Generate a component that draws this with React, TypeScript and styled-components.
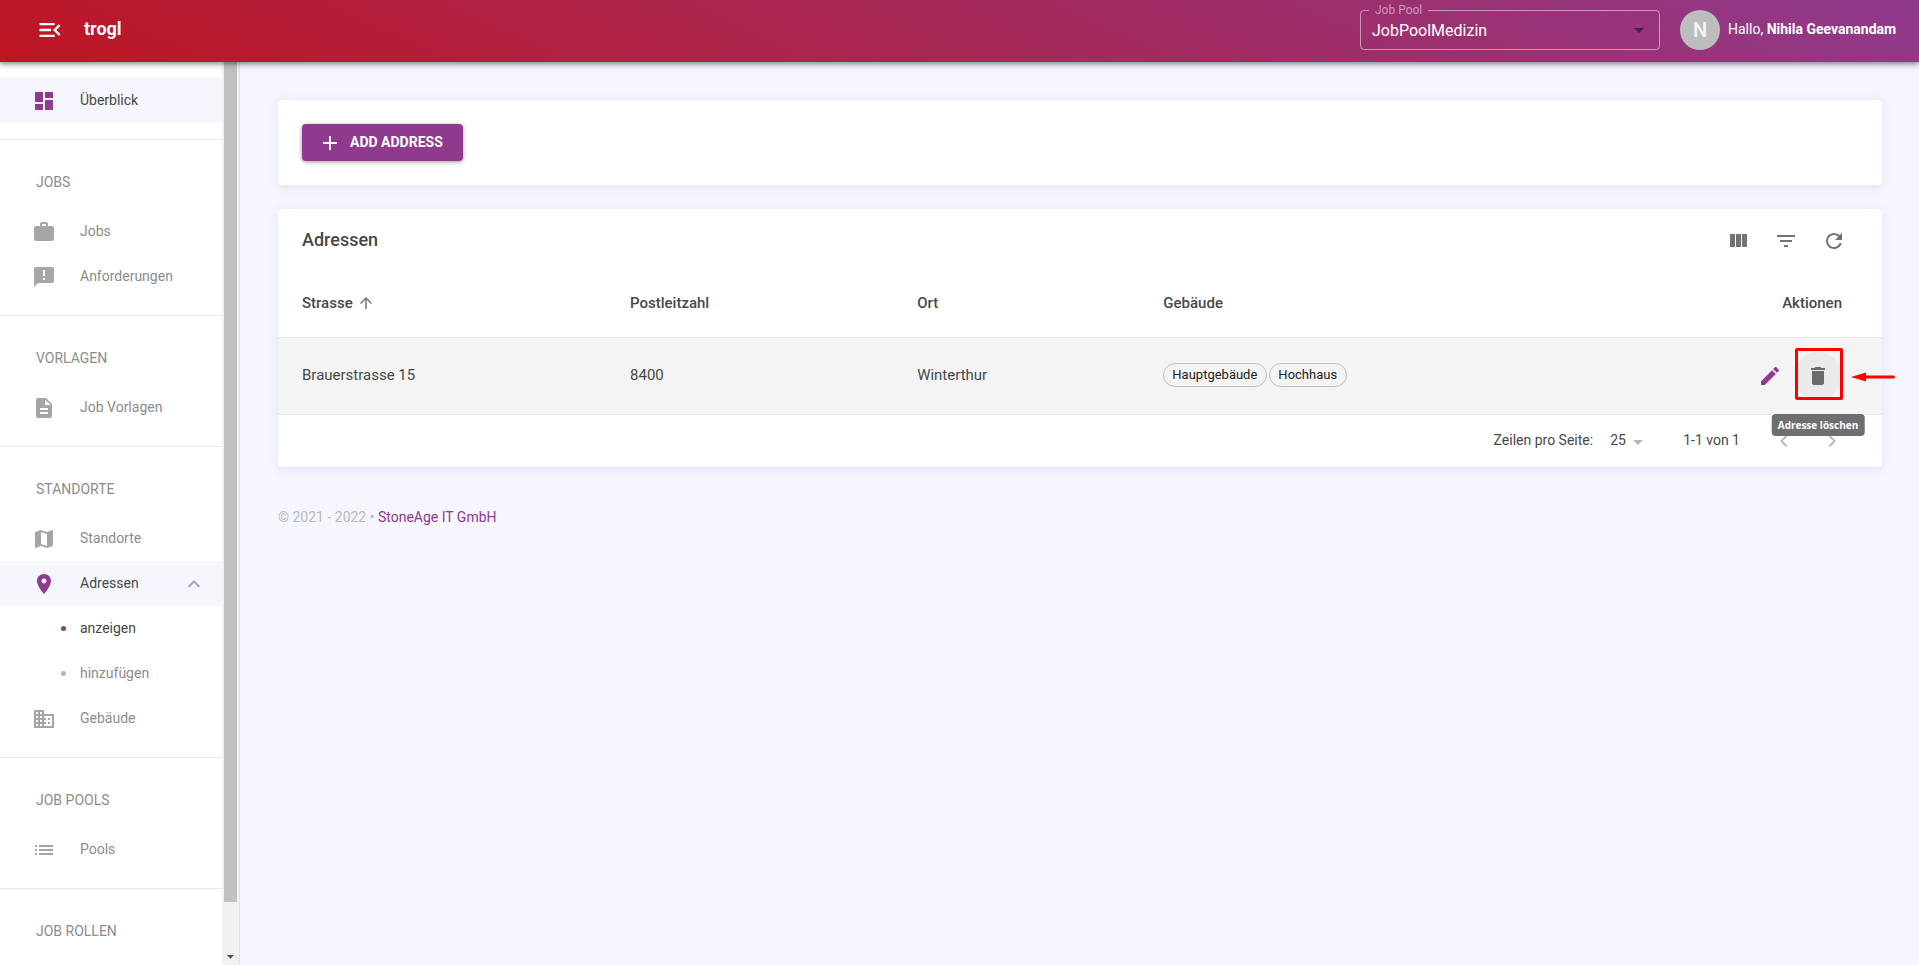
import React from 'react';
import styled, { createGlobalStyle, css } from 'styled-components';

const color = {
  primary: '#8f3a8d',
  page: '#f6f6ff',
  text: '#484848',
  muted: '#8c8c8c',
  icon: '#a6a6a6',
  line: '#e8e8e8',
};

const paths = {
  menuOpen:
    'M3 18h13v-2H3v2zM3 13h10v-2H3v2zm0-7v2h13V6H3zm18 9.59L17.42 12 21 8.41 19.59 7l-5 5 5 5L21 15.59z',
  dashboard: 'M3 13h8V3H3v10zm0 8h8v-6H3v6zm10 0h8V11h-8v10zm0-18v6h8V3h-8z',
  work:
    'M20 6h-4V4c0-1.11-.89-2-2-2h-4c-1.11 0-2 .89-2 2v2H4c-1.11 0-1.99.89-1.99 2L2 19c0 1.11.89 2 2 2h16c1.11 0 2-.89 2-2V8c0-1.11-.89-2-2-2zm-6 0h-4V4h4v2z',
  announcement:
    'M20 2H4c-1.1 0-1.99.9-1.99 2L2 22l4-4h14c1.1 0 2-.9 2-2V4c0-1.1-.9-2-2-2zm-7 9h-2V5h2v6zm0 4h-2v-2h2v2z',
  description:
    'M14 2H6c-1.1 0-1.99.9-1.99 2L4 20c0 1.1.89 2 1.99 2H18c1.1 0 2-.9 2-2V8l-6-6zm2 16H8v-2h8v2zm0-4H8v-2h8v2zm-3-5V3.5L18.5 9H13z',
  map:
    'M20.5 3l-.16.03L15 5.1 9 3 3.36 4.9c-.21.07-.36.25-.36.48V20.5c0 .28.22.5.5.5l.16-.03L9 18.9l6 2.1 5.64-1.9c.21-.07.36-.25.36-.48V3.5c0-.28-.22-.5-.5-.5zM15 19l-6-2.11V5l6 2.11V19z',
  place:
    'M12 2C8.13 2 5 5.13 5 9c0 5.25 7 13 7 13s7-7.75 7-13c0-3.87-3.13-7-7-7zm0 9.5c-1.38 0-2.5-1.12-2.5-2.5s1.12-2.5 2.5-2.5 2.5 1.12 2.5 2.5-1.12 2.5-2.5 2.5z',
  building:
    'M12 7V3H2v18h20V7H12zM6 19H4v-2h2v2zm0-4H4v-2h2v2zm0-4H4V9h2v2zm0-4H4V5h2v2zm4 12H8v-2h2v2zm0-4H8v-2h2v2zm0-4H8V9h2v2zm0-4H8V5h2v2zm10 12h-8v-2h2v-2h-2v-2h2v-2h-2V9h8v10zm-2-8h-2v2h2v-2zm0 4h-2v2h2v-2z',
  list:
    'M3 13h2v-2H3v2zm0 4h2v-2H3v2zm0-8h2V7H3v2zm4 4h14v-2H7v2zm0 4h14v-2H7v2zM7 7v2h14V7H7z',
  expandLess: 'M12 8l-6 6 1.41 1.41L12 10.83l4.59 4.58L18 14z',
  add: 'M19 13h-6v6h-2v-6H5v-2h6V5h2v6h6v2z',
  viewColumn: 'M10 18h5V5h-5v13zm-6 0h5V5H4v13zM16 5v13h5V5h-5z',
  filter: 'M10 18h4v-2h-4v2zM3 6v2h18V6H3zm3 7h12v-2H6v2z',
  refresh:
    'M17.65 6.35C16.2 4.9 14.21 4 12 4c-4.42 0-7.99 3.58-7.99 8s3.57 8 7.99 8c3.73 0 6.84-2.55 7.73-6h-2.08c-.82 2.33-3.04 4-5.65 4-3.31 0-6-2.69-6-6s2.69-6 6-6c1.66 0 3.14.69 4.22 1.78L13 11h7V4l-2.35 2.35z',
  arrowUp: 'M4 12l1.41 1.41L11 7.83V20h2V7.83l5.58 5.59L20 12l-8-8-8 8z',
  edit:
    'M3 17.25V21h3.75L17.81 9.94l-3.75-3.75L3 17.25zM20.71 7.04c.39-.39.39-1.02 0-1.41l-2.34-2.34c-.39-.39-1.02-.39-1.41 0l-1.83 1.83 3.75 3.75 1.83-1.83z',
  trash: 'M6 19c0 1.1.9 2 2 2h8c1.1 0 2-.9 2-2V7H6v12zM19 4h-3.5l-1-1h-5l-1 1H5v2h14V4z',
  chevronLeft: 'M15.41 7.41L14 6l-6 6 6 6 1.41-1.41L10.83 12z',
  chevronRight: 'M10 6L8.59 7.41 13.17 12l-4.58 4.59L10 18l6-6z',
  dropDown: 'M7 10l5 5 5-5z',
};

type IconName = keyof typeof paths;

const Svg = styled.svg`
  display: block;
  flex: none;
  fill: currentColor;
`;

const Icon = ({ name, size = 24 }: { name: IconName; size?: number }) => (
  <Svg width={size} height={size} viewBox="0 0 24 24" aria-hidden="true">
    <path d={paths[name]} />
  </Svg>
);

const GlobalStyle = createGlobalStyle`
  *, *::before, *::after { box-sizing: border-box; }
  body {
    margin: 0;
    background: ${color.page};
    color: ${color.text};
    font-family: Roboto, "Liberation Sans", sans-serif;
    font-size: 14px;
    line-height: 20px;
  }
  button, select { font: inherit; color: inherit; }
  a { color: inherit; text-decoration: none; }
`;

const Shell = styled.div`
  display: flex;
  flex-direction: column;
  height: 100vh;
`;

const Header = styled.header`
  position: relative;
  z-index: 2;
  display: flex;
  align-items: center;
  flex: none;
  height: 62px;
  padding: 0 19px 2px 30px;
  color: #fff;
  background: linear-gradient(25deg, #be1622, ${color.primary});
  box-shadow: 0 2px 4px rgba(0, 0, 0, 0.32), 0 3px 8px rgba(0, 0, 0, 0.16);
`;

const IconButton = styled.button<{ $size?: number; $active?: boolean }>`
  display: flex;
  align-items: center;
  justify-content: center;
  flex: none;
  width: ${(p) => p.$size ?? 48}px;
  height: ${(p) => p.$size ?? 48}px;
  padding: 0;
  border: 0;
  border-radius: 50%;
  background: ${(p) => (p.$active ? '#eaeaea' : 'transparent')};
`;

const Brand = styled.a`
  margin-left: 14px;
  margin-right: auto;
  padding-bottom: 2px;
  font-size: 18px;
  font-weight: 700;
  line-height: 24px;
`;

const PoolField = styled.fieldset`
  position: relative;
  width: 300px;
  height: 50px;
  margin: 0 20px 10px 0;
  padding: 0;
  border: 1px solid rgba(255, 255, 255, 0.5);
  border-radius: 4px;

  legend {
    margin-left: 8px;
    padding: 0 6px;
    color: rgba(255, 255, 255, 0.5);
    font-size: 12px;
    line-height: 20px;
  }
`;

const PoolSelect = styled.select`
  display: block;
  width: 100%;
  height: 22px;
  padding: 0 32px 0 11px;
  border: 0;
  appearance: none;
  background: transparent;
  color: #fff;
  font-size: 16px;
  line-height: 22px;
`;

const PoolCaret = styled.span`
  position: absolute;
  right: 8px;
  bottom: 7px;
  color: #4b1d49;
  pointer-events: none;
`;

const Avatar = styled.span`
  display: flex;
  align-items: center;
  justify-content: center;
  width: 40px;
  height: 40px;
  margin-right: 8px;
  border-radius: 50%;
  background: #bdbdbd;
  color: ${color.page};
  font-size: 20px;
  font-weight: 500;
`;

const Greeting = styled.span`
  min-width: 172px;
  padding-bottom: 2px;
`;

const Body = styled.div`
  display: flex;
  flex: 1;
  min-height: 0;
`;

const Sidebar = styled.aside`
  display: flex;
  flex: none;
  width: 240px;
  border-right: 1px solid #e0e0e0;
  background: #fff;
`;

const Nav = styled.nav`
  flex: 1;
  overflow: hidden;
`;

const NavGroup = styled.section`
  padding: 16px 0;

  & + & {
    border-top: 1px solid ${color.line};
  }
`;

const NavHeading = styled.h2`
  margin: 0;
  padding: 16px 36px 17px;
  color: ${color.muted};
  font-size: 14px;
  font-weight: 400;
  line-height: 20px;
`;

const NavItem = styled.a<{ $selected?: boolean; $current?: boolean }>`
  display: flex;
  align-items: center;
  height: 45px;
  padding: 0 16px 0 32px;
  gap: 24px;
  color: ${(p) => (p.$selected || p.$current ? color.text : color.muted)};
  background: ${(p) => (p.$selected ? color.page : 'transparent')};

  span {
    padding-bottom: 2px;
  }

  svg {
    color: ${(p) => (p.$selected ? color.primary : color.icon)};
  }

  svg:last-child {
    margin-left: auto;
    color: ${color.icon};
  }
`;

const SubItem = styled(NavItem)`
  padding-left: 61px;
  gap: 14px;

  &::before {
    content: '';
    width: 5px;
    height: 5px;
    border-radius: 50%;
    background: ${(p) => (p.$current ? color.primary : '#b4b4b4')};
  }
`;

const ScrollTrack = styled.div`
  display: flex;
  flex-direction: column;
  align-items: center;
  width: 17px;
  padding: 0 2px;
  background: #f1f1f1;
  color: #505050;
`;

const ScrollThumb = styled.div`
  flex: 1;
  width: 100%;
  margin-bottom: 46px;
  background: #c1c1c1;
`;

const Main = styled.main`
  flex: 1;
  min-width: 0;
  padding: 38px 37px 38px 38px;
`;

const Card = styled.section<{ $padded?: boolean }>`
  margin-bottom: 24px;
  padding: ${(p) => (p.$padded ? '24px' : '0')};
  border-radius: 4px;
  background: #fff;
  box-shadow: 0 3px 11px #e8eafc, 0 3px 3px -2px #e4e6f8, 0 1px 8px #e8eafc;
`;

const AddButton = styled.button`
  display: flex;
  align-items: center;
  gap: 8px;
  height: 37px;
  padding: 0 20px 0 16px;
  border: 0;
  border-radius: 4px;
  background: ${color.primary};
  color: #fff;
  font-weight: 700;
  box-shadow: 0 1px 4px rgba(0, 0, 0, 0.4);

  span {
    padding-bottom: 2px;
  }
`;

const Toolbar = styled.div`
  display: flex;
  align-items: center;
  height: 64px;
  padding: 0 24px;
  color: #737373;
`;

const Title = styled.h1`
  margin: 0 auto 0 0;
  padding-bottom: 2px;
  color: ${color.text};
  font-size: 18px;
  font-weight: 500;
  line-height: 24px;
`;

const Table = styled.table`
  width: 100%;
  table-layout: fixed;
  border-collapse: separate;
  border-spacing: 0;
  font-size: 15px;
  text-align: left;
`;

const cell = css<{ $end?: boolean }>`
  padding: 0 ${(p) => (p.$end ? '40px' : '0')} 0 24px;
  border-bottom: 1px solid ${color.line};
`;

const HeadCell = styled.th<{ $end?: boolean; $width?: string }>`
  ${cell}
  width: ${(p) => p.$width ?? 'auto'};
  height: 65px;
  padding-bottom: 4px;
  font-weight: 500;
  text-align: ${(p) => (p.$end ? 'right' : 'left')};
`;

const SortButton = styled.button`
  display: flex;
  align-items: center;
  gap: 4px;
  padding: 0;
  border: 0;
  background: transparent;

  svg {
    color: #737373;
  }
`;

const Cell = styled.td<{ $end?: boolean }>`
  ${cell}
  height: 77px;
  padding-bottom: ${(p) => (p.$end ? '0' : '2px')};
  background: #f4f4f4;
`;

const Chips = styled.div`
  display: flex;
  gap: 2px;
`;

const Chip = styled.span`
  height: 24px;
  padding: 0 9px 0 8px;
  border: 1px solid #bdbdbd;
  border-radius: 12px;
  color: #212121;
  font-size: 13px;
  line-height: 22px;
`;

const Actions = styled.div`
  display: flex;
  justify-content: flex-end;
  color: ${color.primary};
`;

const Highlighted = styled.div`
  position: relative;
  color: #6b6b6b;
`;

const Marker = styled.span`
  position: absolute;
  inset: -4px -1px 0 1px;
  border: 3px solid #f00;
  border-radius: 2px;
  pointer-events: none;
`;

const Pointer = styled.svg`
  position: absolute;
  top: 20px;
  left: 100%;
  margin-left: 9px;
  overflow: visible;
`;

const Tooltip = styled.span`
  position: absolute;
  z-index: 1;
  top: 62px;
  left: 50%;
  transform: translateX(-50%);
  padding: 4px 6px;
  border-radius: 4px;
  background: #6f6f6f;
  color: #fff;
  font-family: "Open Sans", "Noto Sans", sans-serif;
  font-size: 10px;
  font-weight: 700;
  line-height: 14px;
  white-space: nowrap;
`;

const Pagination = styled.div`
  display: flex;
  align-items: center;
  justify-content: flex-end;
  height: 52px;
  padding-right: 26px;
`;

const PageSize = styled.label`
  display: flex;
  align-items: center;
  gap: 17px;
  padding-bottom: 2px;
`;

const PageSelectBox = styled.span`
  position: relative;
  color: #b5b5b5;

  select {
    display: block;
    width: 42px;
    height: 20px;
    padding: 0;
    border: 0;
    appearance: none;
    background: transparent;
    color: ${color.text};
  }

  svg {
    position: absolute;
    top: 0;
    right: 2px;
    pointer-events: none;
  }
`;

const PageInfo = styled.span`
  margin: 0 20px 0 31px;
  padding-bottom: 2px;
`;

const Pager = styled.div`
  display: flex;
  color: #bdbdbd;
`;

const Footer = styled.footer`
  margin-top: 40px;
  color: #b8b8bf;

  a {
    color: ${color.primary};
  }
`;

export default function App() {
  return (
    <Shell>
      <GlobalStyle />
      <Header>
        <IconButton $size={40} aria-label="Menü schließen">
          <Icon name="menuOpen" size={28} />
        </IconButton>
        <Brand href="#">trogl</Brand>
        <PoolField>
          <legend>
            <label htmlFor="pool">Job Pool</label>
          </legend>
          <PoolSelect id="pool" defaultValue="JobPoolMedizin">
            <option>JobPoolMedizin</option>
          </PoolSelect>
          <PoolCaret>
            <Icon name="dropDown" />
          </PoolCaret>
        </PoolField>
        <Avatar>N</Avatar>
        <Greeting>
          Hallo, <b>Nihila Geevanandam</b>
        </Greeting>
      </Header>
      <Body>
        <Sidebar>
          <Nav>
            <NavGroup>
              <NavItem href="#" $selected>
                <Icon name="dashboard" />
                <span>Überblick</span>
              </NavItem>
            </NavGroup>
            <NavGroup>
              <NavHeading>JOBS</NavHeading>
              <NavItem href="#">
                <Icon name="work" />
                <span>Jobs</span>
              </NavItem>
              <NavItem href="#">
                <Icon name="announcement" />
                <span>Anforderungen</span>
              </NavItem>
            </NavGroup>
            <NavGroup>
              <NavHeading>VORLAGEN</NavHeading>
              <NavItem href="#">
                <Icon name="description" />
                <span>Job Vorlagen</span>
              </NavItem>
            </NavGroup>
            <NavGroup>
              <NavHeading>STANDORTE</NavHeading>
              <NavItem href="#">
                <Icon name="map" />
                <span>Standorte</span>
              </NavItem>
              <NavItem href="#" $selected aria-expanded="true">
                <Icon name="place" />
                <span>Adressen</span>
                <Icon name="expandLess" />
              </NavItem>
              <SubItem href="#" $current aria-current="page">
                <span>anzeigen</span>
              </SubItem>
              <SubItem href="#">
                <span>hinzufügen</span>
              </SubItem>
              <NavItem href="#">
                <Icon name="building" />
                <span>Gebäude</span>
              </NavItem>
            </NavGroup>
            <NavGroup>
              <NavHeading>JOB POOLS</NavHeading>
              <NavItem href="#">
                <Icon name="list" />
                <span>Pools</span>
              </NavItem>
            </NavGroup>
            <NavGroup>
              <NavHeading>JOB ROLLEN</NavHeading>
            </NavGroup>
          </Nav>
          <ScrollTrack aria-hidden="true">
            <ScrollThumb />
            <Icon name="dropDown" size={17} />
          </ScrollTrack>
        </Sidebar>
        <Main>
          <Card $padded>
            <AddButton>
              <Icon name="add" />
              <span>ADD ADDRESS</span>
            </AddButton>
          </Card>
          <Card>
            <Toolbar>
              <Title>Adressen</Title>
              <IconButton aria-label="Spalten">
                <Icon name="viewColumn" />
              </IconButton>
              <IconButton aria-label="Filter">
                <Icon name="filter" />
              </IconButton>
              <IconButton aria-label="Aktualisieren">
                <Icon name="refresh" />
              </IconButton>
            </Toolbar>
            <Table>
              <thead>
                <tr>
                  <HeadCell $width="20.45%" aria-sort="ascending">
                    <SortButton>
                      Strasse
                      <Icon name="arrowUp" size={18} />
                    </SortButton>
                  </HeadCell>
                  <HeadCell $width="17.9%">Postleitzahl</HeadCell>
                  <HeadCell $width="15.35%">Ort</HeadCell>
                  <HeadCell>Gebäude</HeadCell>
                  <HeadCell $end>Aktionen</HeadCell>
                </tr>
              </thead>
              <tbody>
                <tr>
                  <Cell>Brauerstrasse 15</Cell>
                  <Cell>8400</Cell>
                  <Cell>Winterthur</Cell>
                  <Cell>
                    <Chips>
                      <Chip>Hauptgebäude</Chip>
                      <Chip>Hochhaus</Chip>
                    </Chips>
                  </Cell>
                  <Cell $end>
                    <Actions>
                      <IconButton aria-label="Adresse bearbeiten">
                        <Icon name="edit" />
                      </IconButton>
                      <Highlighted>
                        <IconButton $active aria-describedby="delete-tip" aria-label="Adresse löschen">
                          <Icon name="trash" />
                        </IconButton>
                        <Marker />
                        <Pointer width="44" height="10" viewBox="0 0 44 10" aria-hidden="true">
                          <path d="M0 5L15 0.5V9.5Z" fill="#f00" />
                          <path d="M12 5H42.5" stroke="#f00" strokeWidth="3" strokeLinecap="round" />
                        </Pointer>
                        <Tooltip id="delete-tip" role="tooltip">
                          Adresse löschen
                        </Tooltip>
                      </Highlighted>
                    </Actions>
                  </Cell>
                </tr>
              </tbody>
            </Table>
            <Pagination>
              <PageSize>
                Zeilen pro Seite:
                <PageSelectBox>
                  <select defaultValue="25">
                    <option>25</option>
                  </select>
                  <Icon name="dropDown" />
                </PageSelectBox>
              </PageSize>
              <PageInfo>1-1 von 1</PageInfo>
              <Pager>
                <IconButton aria-label="Vorherige Seite" disabled>
                  <Icon name="chevronLeft" />
                </IconButton>
                <IconButton aria-label="Nächste Seite" disabled>
                  <Icon name="chevronRight" />
                </IconButton>
              </Pager>
            </Pagination>
          </Card>
          <Footer>
            © 2021 - 2022 • <a href="#">StoneAge IT GmbH</a>
          </Footer>
        </Main>
      </Body>
    </Shell>
  );
}
